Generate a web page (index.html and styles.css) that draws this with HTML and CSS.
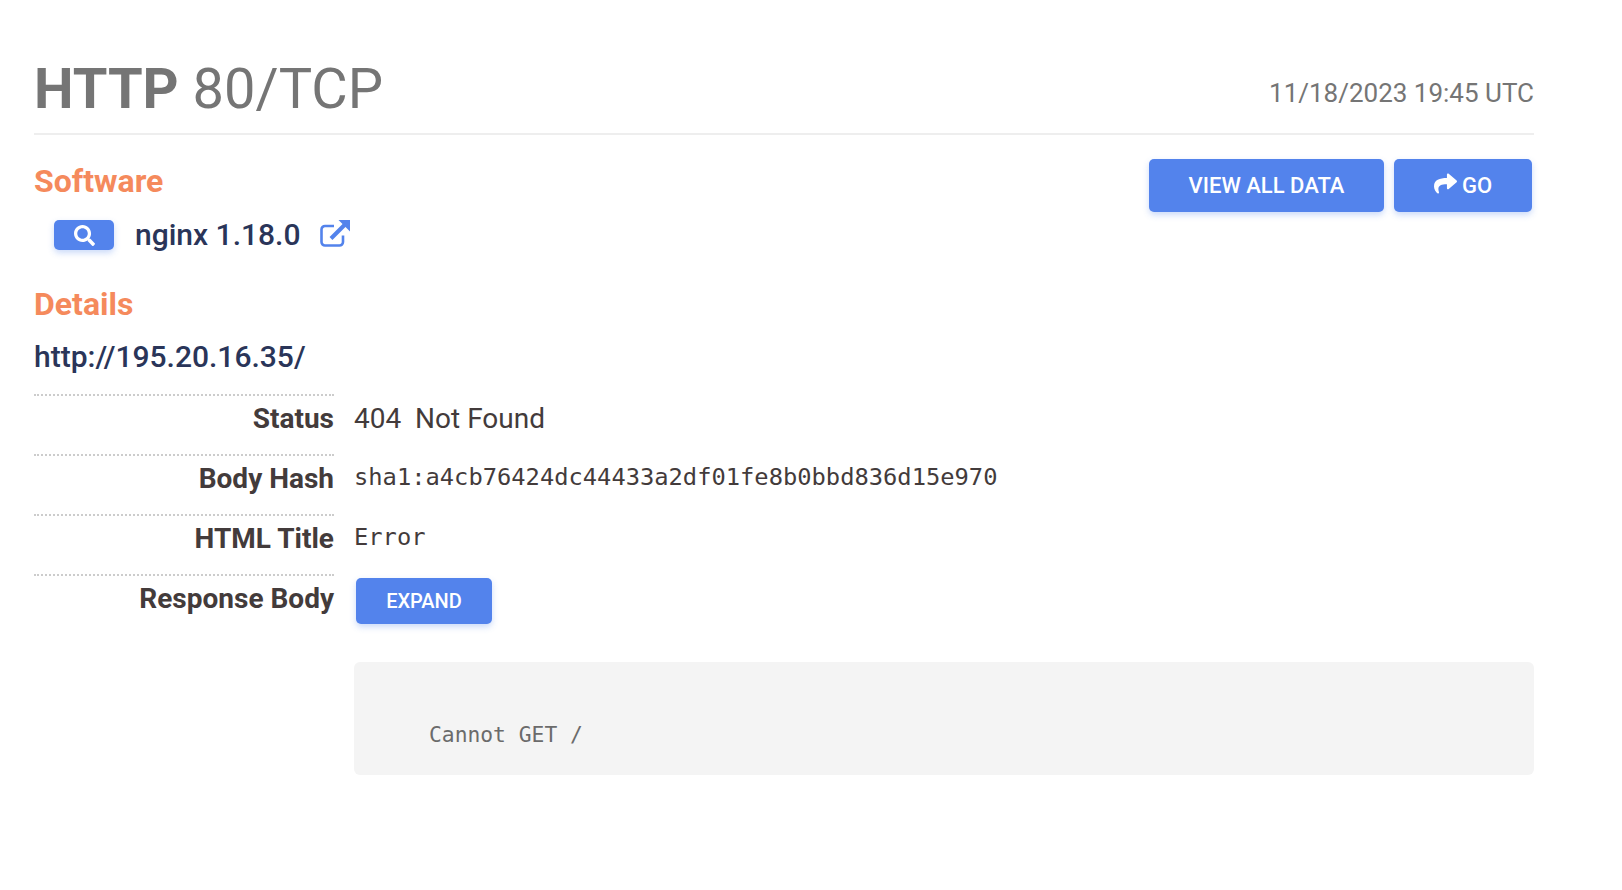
FILE: index.html
```html
<!DOCTYPE html>
<html>
  <head>
    <meta charset="UTF-8" />
    <title>HTTP 80/TCP</title>
    <link rel="stylesheet" href="styles.css">
  </head>
  <body>
    <div class="service">
      <header class="service-head">
        <h1><b>HTTP</b> 80/TCP</h1>
        <span class="timestamp">11/18/2023 19:45 UTC</span>
      </header>

      <div class="software-row">
        <section>
          <h2>Software</h2>
          <div class="software-item">
            <a href="#" class="btn btn-search">
              <svg viewBox="0 0 512 512" class="icon-search"><path d="M505 442.7L405.3 343c-4.5-4.5-10.6-7-17-7H372c27.6-35.3 44-79.7 44-128C416 93.1 322.9 0 208 0S0 93.1 0 208s93.1 208 208 208c48.3 0 92.7-16.4 128-44v16.3c0 6.4 2.5 12.5 7 17l99.7 99.7c9.4 9.4 24.6 9.4 33.9 0l28.3-28.3c9.4-9.4 9.4-24.6.1-34zM208 336c-70.7 0-128-57.2-128-128 0-70.7 57.2-128 128-128 70.7 0 128 57.2 128 128 0 70.7-57.2 128-128 128z"/></svg>
            </a>
            <span class="software-name">nginx 1.18.0</span>
            <svg viewBox="0 0 30 27" class="icon-external">
              <path class="icon-box" d="M23 15.5v6.5a3.5 3.5 0 0 1-3.5 3.5H5a3.5 3.5 0 0 1-3.5-3.5V9.5A3.5 3.5 0 0 1 5 6h9"/>
              <path class="icon-arrow" d="M11 18.5L25 4.5"/>
              <path class="icon-head" d="M18.5 0H30v11.5z"/>
            </svg>
          </div>
        </section>
        <div class="actions">
          <a href="#" class="btn btn-large">VIEW ALL DATA</a>
          <a href="#" class="btn btn-large btn-go">
            <svg viewBox="0 0 512 512" class="icon-share"><path d="M503.691 189.836L327.687 37.851C312.281 24.546 288 35.347 288 56.015v80.053C127.371 137.907 0 170.1 0 322.326c0 61.441 39.581 122.309 83.333 154.132 13.653 9.931 33.111-2.533 28.077-18.631C66.066 312.814 132.917 274.316 288 272.085V360c0 20.7 24.3 31.453 39.687 18.164l176.004-152c11.071-9.562 11.086-26.753 0-36.328z"/></svg>
            GO
          </a>
        </div>
      </div>

      <section class="details">
        <h2>Details</h2>
        <div class="url">http://195.20.16.35/</div>
        <div class="detail-row">
          <div class="detail-label">Status</div>
          <div class="detail-value detail-status">404&nbsp; Not Found</div>
        </div>
        <div class="detail-row">
          <div class="detail-label">Body Hash</div>
          <div class="detail-value detail-mono">sha1:a4cb76424dc44433a2df01fe8b0bbd836d15e970</div>
        </div>
        <div class="detail-row">
          <div class="detail-label">HTML Title</div>
          <div class="detail-value detail-mono">Error</div>
        </div>
        <div class="detail-row">
          <div class="detail-label">Response Body</div>
          <div class="detail-value"><a href="#" class="btn btn-expand">EXPAND</a></div>
        </div>
        <pre class="response-body">Cannot GET /</pre>
      </section>
    </div>
  </body>
</html>
```

FILE: styles.css
```css
* {
  box-sizing: border-box;
}

body {
  margin: 0;
  background: #fff;
  font-family: Roboto, sans-serif;
}

.service {
  width: 1500px;
  margin-left: 34px;
  padding-top: 53px;
}

/* Title bar */
.service-head {
  display: flex;
  justify-content: space-between;
  height: 82px;
  border-bottom: 2px solid #eee;
  color: #757575;
}

h1 {
  margin: 0;
  font-size: 56px;
  line-height: 72px;
  font-weight: 400;
}

h1 b {
  font-weight: 700;
}

.timestamp {
  padding-top: 24px;
  font-size: 26px;
  line-height: 32px;
}

h2 {
  margin: 0;
  font-size: 32px;
  line-height: 40px;
  font-weight: 700;
  color: #f58a5c;
}

/* Software */
.software-row {
  display: flex;
  justify-content: space-between;
  padding-top: 26px;
}

.software-item {
  display: flex;
  align-items: center;
  height: 40px;
  padding-left: 20px;
  margin-top: 14px;
}

.software-name {
  margin: -2px 20px 0 21px;
  font-size: 30px;
  font-weight: 500;
  color: #2a3559;
}

.btn {
  display: flex;
  justify-content: center;
  align-items: center;
  background: #5383ec;
  color: #fff;
  border-radius: 5px;
  text-decoration: none;
  font-weight: 500;
  box-shadow: 0 3px 6px rgba(83, 131, 236, 0.3);
}

.btn-search {
  width: 60px;
  height: 30px;
}

.icon-search {
  width: 21px;
  height: 21px;
  fill: #fff;
}

.icon-external {
  width: 30px;
  height: 27px;
  margin-bottom: 4px;
}

.icon-box,
.icon-arrow {
  fill: none;
  stroke: #5383ec;
  stroke-width: 2.6;
}

.icon-arrow {
  stroke-width: 4;
}

.icon-head {
  fill: #5383ec;
}

.actions {
  display: flex;
  gap: 10px;
  margin: -2px 2px 0 0;
}

.btn-large {
  width: 235px;
  height: 53px;
  font-size: 22px;
}

.btn-go {
  width: 138px;
  gap: 5px;
}

.icon-share {
  width: 23px;
  height: 23px;
  fill: #fff;
  margin-bottom: 4px;
}

/* Details */
.details {
  margin-top: 29px;
}

.url {
  margin-top: 13px;
  font-size: 30px;
  line-height: 40px;
  font-weight: 500;
  color: #2a3559;
}

.detail-row {
  display: flex;
  height: 60px;
}

.url + .detail-row {
  margin-top: 17px;
}

.detail-label {
  width: 300px;
  padding-top: 5px;
  border-top: 2px dotted #ccc;
  text-align: right;
  font-size: 28px;
  line-height: 36px;
  font-weight: 700;
  color: #433b3b;
}

.detail-value {
  padding: 9px 0 0 20px;
  color: #433b3b;
}

.detail-status {
  font-size: 28px;
  line-height: 32px;
}

.detail-mono {
  padding-top: 8px;
  font-family: "DejaVu Sans Mono", monospace;
  font-size: 23.75px;
  line-height: 30px;
}

.btn-expand {
  width: 136px;
  height: 46px;
  margin: -5px 0 0 2px;
  font-size: 20px;
}

.response-body {
  margin: 28px 0 0 320px;
  height: 113px;
  padding: 58px 75px 0;
  background: #f4f4f4;
  border-radius: 6px;
  font-family: "DejaVu Sans Mono", monospace;
  font-size: 21.3px;
  line-height: 30px;
  color: #6b6b6b;
}
```
